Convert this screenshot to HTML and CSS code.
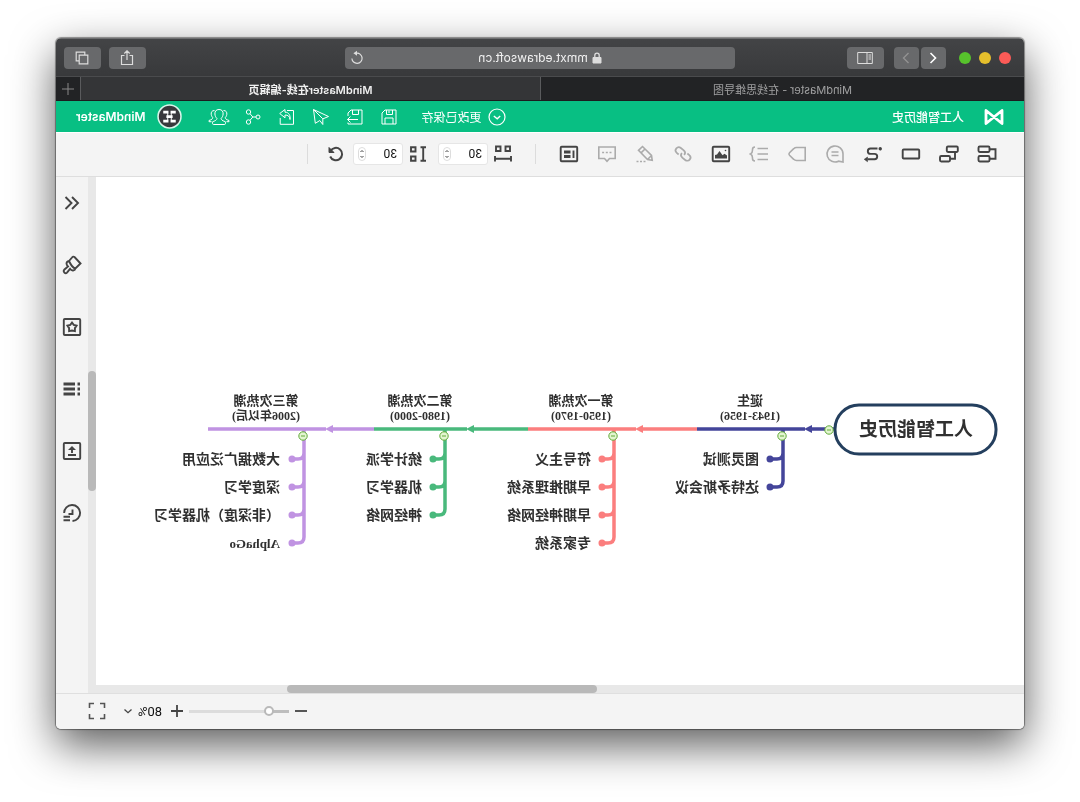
FILE: index.html
```html
<!DOCTYPE html>
<html lang="zh-CN">
<head>
<meta charset="utf-8">
<title>MindMaster在线-编辑页</title>
<link rel="stylesheet" href="styles.css">
</head>
<body>
<div class="window">
  <header class="titlebar">
    <div class="titlebar-group titlebar-group-start">
      <button class="light light-close" aria-label="Close"></button>
      <button class="light light-min" aria-label="Minimize"></button>
      <button class="light light-max" aria-label="Zoom"></button>
      <div class="nav-pair">
        <button class="chrome-btn chrome-btn-narrow" aria-label="Back"><svg class="i16" viewBox="0 0 16 16"><path d="M10.500 3L5.500 8l5 5" stroke="#fff" stroke-width="1.600"/></svg></button>
        <button class="chrome-btn chrome-btn-narrow" aria-label="Forward"><svg class="i16" viewBox="0 0 16 16"><path d="M5.500 3l5 5-5 5" stroke="#929292" stroke-width="1.400"/></svg></button>
      </div>
      <button class="chrome-btn" aria-label="Sidebar"><svg class="i16" viewBox="0 0 16 16"><path d="M.7 2.500h14.600v11H.7zM6 2.500v11M2 5h2.500M2 7h2.500M2 9h2.500" stroke="#ddd"/></svg></button>
    </div>
    <div class="address">
      <span class="address-text"><svg class="lock" viewBox="0 0 10 12"><path d="M1 5.500h8V11H1z" fill="#ddd" stroke="#ddd"/><path d="M2.800 5.500V3.300a2.200 2.200 0 0 1 4.400 0v2.200" stroke="#ddd" stroke-width="1.300"/></svg>mmxt.edrawsoft.cn</span>
      <button class="reload" aria-label="Reload"><svg class="i16" viewBox="0 0 16 16"><path d="M8.500 3.200a5.100 5.100 0 1 0 4.600 5.300" stroke="#ddd" stroke-width="1.200"/><path d="M8 .8l3.600 2.400L8 5.800z" fill="#ddd"/></svg></button>
    </div>
    <div class="titlebar-group titlebar-group-end">
      <button class="chrome-btn" aria-label="Share"><svg class="i16" viewBox="0 0 16 16"><path d="M5.500 5.500h-3v9h11v-9h-3M8 10V1M5.300 3.500L8 .8l2.700 2.700" stroke="#ddd" stroke-width="1.200"/></svg></button>
      <button class="chrome-btn" aria-label="Tabs"><svg class="i16" viewBox="0 0 16 16"><path d="M2.200 5.200h8.600v8.600H2.200zM5.200 5V2.200h8.600v8.600H11" stroke="#ddd" stroke-width="1.200"/></svg></button>
    </div>
  </header>

  <nav class="tabs">
    <a class="tab" href="#home">MindMaster - 在线思维导图</a>
    <a class="tab tab-active" href="#edit">MindMaster在线-编辑页</a>
    <button class="tab-add" aria-label="New tab"><svg class="i16" viewBox="0 0 16 16"><path d="M8 2v12M2 8h12" stroke="#888"/></svg></button>
  </nav>

  <div class="appbar">
    <svg class="logo" viewBox="0 0 20 16"><path d="M2 1.500l16 13V1.500l-16 13z" stroke="#fff" stroke-width="2.800" stroke-linejoin="round"/></svg>
    <h1 class="doc-name">人工智能历史</h1>
    <div class="saved"><svg class="i18" viewBox="0 0 18 18"><circle cx="9" cy="9" r="8" stroke="#fff" stroke-width="1.200"/><path d="M5.800 8l3 2.800L12.200 8" stroke="#fff" stroke-width="1.400"/></svg><span>更改已保存</span></div>
    <div class="app-actions">
      <button class="app-btn" aria-label="保存"><svg class="i18" viewBox="0 0 18 18"><path d="M2 2h11l3 3v11H2zM5 16v-6h8v6M5.500 2v4.500h6V2M9 2.500V5"/></svg></button>
      <button class="app-btn" aria-label="另存为"><svg class="i18" viewBox="0 0 18 18"><path d="M16 8V5l-3-3H2v14h14v-1.500M5.500 2v4.500h6V2M6 11.500h10.500M13.500 8.500l3 3-3 3"/></svg></button>
      <button class="app-btn" aria-label="发送"><svg class="i18" viewBox="0 0 18 18"><path d="M16.500 1.500L1.500 8.500l5.500 2.300M16.500 1.500l-1.800 13.800-4.500-2.800M16.500 1.500L7.200 10.800v5.700l3-4"/></svg></button>
      <button class="app-btn" aria-label="导出"><svg class="i18" viewBox="0 0 18 18"><path d="M9 2.500H2.500v13.800h13.300V10M6 11.500c.4-3.300 2-4.500 5-4.500v2.800l5.300-4.300-5.300-4v2.700C7 4.200 5.500 7.500 6 11.500z"/></svg></button>
      <button class="app-btn" aria-label="分享"><svg class="i18" viewBox="0 0 18 18"><circle cx="4" cy="9" r="2"/><circle cx="13.500" cy="4" r="2.200"/><circle cx="13.500" cy="14" r="2.200"/><path d="M6 9h3.200l2.800-3.300M9.200 9l2.800 3.300"/></svg></button>
      <button class="app-btn" aria-label="协作"><svg class="i22" viewBox="0 0 22 18"><path d="M11 1.500c-3 0-4.300 2-4.100 4.500.2 2.100.9 3.400 2 4.300-.1 1.500-.8 2.200-4.200 3.400-.5 1.700 0 2.800.6 2.800h11.400c.6 0 1.100-1.100.6-2.800-3.400-1.200-4.100-1.900-4.200-3.400 1.100-.9 1.800-2.200 2-4.300.2-2.500-1.100-4.500-4.100-4.500zM6.500 2.500C3.800 2.500 3 4.200 3.200 6.300c.2 1.600.8 2.600 1.500 3.200-.2 1.500-.7 2-3.700 3v1.200h2.500M15.500 2.500c2.700 0 3.500 1.700 3.300 3.800-.2 1.600-.8 2.600-1.500 3.200.2 1.500.7 2 3.700 3v1.200h-2.500"/></svg></button>
    </div>
    <svg class="avatar" viewBox="0 0 24 24"><circle cx="12" cy="12" r="11" fill="#38383c" stroke="#d9f5ea" stroke-width="1.500"/><path d="M6 6.500h5v2.700H6zM13 6.500h5v2.700h-5zM6 15h5v2.700H6zM13 15h5v2.700h-5zM9 10.700h6v2.800H9z" fill="#fff"/><path d="M10.300 8.500v7M13.700 8.500v7" stroke="#fff" stroke-width=".9"/></svg>
    <span class="account">MindMaster</span>
  </div>

  <div class="toolbar">
    <button class="tool" aria-label="主题"><svg class="i20" viewBox="0 0 20 20"><rect x="7.500" y="2.500" width="11" height="5.500" rx="1.200"/><rect x="7.500" y="12" width="11" height="5.500" rx="1.200"/><path d="M7.500 5.200h-6v9.500h6"/></svg></button>
    <button class="tool" aria-label="子主题"><svg class="i20" viewBox="0 0 20 20"><rect x="1.200" y="2.500" width="11" height="5.500" rx="1.200"/><rect x="9" y="12" width="10" height="5.500" rx="1.200"/><path d="M4 8v6.700h5"/></svg></button>
    <button class="tool" aria-label="浮动主题"><svg class="i20" viewBox="0 0 20 20"><rect x="1.800" y="5.500" width="16.500" height="9" rx="1"/></svg></button>
    <button class="tool" aria-label="关系线"><svg class="i20" viewBox="0 0 20 20"><path d="M5.500 4.500h7a2.700 2.700 0 0 1 0 5.400H8.500a2.700 2.700 0 0 0 0 5.400h7"/><circle cx="2.800" cy="4.800" r="1" fill="#444" stroke-width="1.400"/><path d="M15.500 13l3.300 2.300-3.300 2.400z" fill="#444" stroke-width=".6"/></svg></button>
    <button class="tool tool-off" aria-label="标注"><svg class="i20" viewBox="0 0 20 20"><path d="M2 18v-8a8 8 0 1 1 4.500 7.200L2 18zM6.500 8h7M6.500 11.500h7"/></svg></button>
    <button class="tool tool-off" aria-label="外框"><svg class="i20" viewBox="0 0 20 20"><path d="M1.800 3.500h8.700c1.200 0 2 .4 2.800 1.200l4.200 4q1.200 1.300 0 2.600l-4.200 4c-.8.800-1.600 1.200-2.800 1.200H1.800z"/></svg></button>
    <button class="tool tool-off" aria-label="概要"><svg class="i20" viewBox="0 0 20 20"><path d="M1 4.500h10.500M1 10h10.500M1 15.500h10.500M14 3c2 0 2.500.8 2.500 2.500S16.300 9 18.500 10c-2.200 1-2 2.800-2 4.500s-.5 2.500-2.500 2.500"/></svg></button>
    <button class="tool" aria-label="图片"><svg class="i20" viewBox="0 0 20 20"><rect x="1.800" y="2.800" width="16.500" height="14.500" rx="1"/><path d="M4 14.500v-3l2.500-1.700 2 1.500L11.500 7l2.500 3.500 2 .5v3.500z" fill="#444" stroke="none"/><circle cx="5.500" cy="6.500" r=".8" fill="#444" stroke="none"/></svg></button>
    <button class="tool tool-off" aria-label="超链接"><svg class="i20" viewBox="0 0 20 20"><g transform="rotate(-40 10 10)" stroke-width="1.700"><path d="M11.500 10a3.200 3.200 0 0 1-3.200 3.200H4.500a3.200 3.200 0 0 1 0-6.400H7M8.500 10a3.200 3.200 0 0 1 3.200-3.200h3.800a3.200 3.200 0 0 1 0 6.400H13"/></g></svg></button>
    <button class="tool tool-off" aria-label="注释"><svg class="i20" viewBox="0 0 20 20"><path d="M12.500 2.500l4 3.800-9 9.200-4.700.8.700-4.800zM10 5l4 3.800M3.500 11.500l4 4"/><path d="M9.500 17.500h9" stroke-dasharray="2 1.500"/></svg></button>
    <button class="tool tool-off" aria-label="评论"><svg class="i20" viewBox="0 0 20 20"><path d="M1.800 3h16.400v11.500h-5.700L10 17.300l-2.500-2.800H1.800z"/><path d="M5.500 8.500h9.500" stroke-dasharray="2 1.700"/></svg></button>
    <button class="tool" aria-label="备注"><svg class="i20" viewBox="0 0 20 20"><rect x="1.800" y="2.800" width="16.500" height="14.500" rx="1"/><path d="M5.500 6.500v7.500"/><path d="M8.500 8H15M8.500 12.500H15" stroke-width="2.800"/></svg></button>
    <span class="divider"></span>
    <label class="spacing"><svg class="i20" viewBox="0 0 20 20"><path d="M3 2.500h4.500v4.500H3zM12.500 2.500H17v4.500h-4.500zM2 12v5.500M18 12v5.500M2 14.800h16"/></svg>
      <span class="stepper"><input class="step-input" type="text" value="30" aria-label="水平间距"><svg class="arrows" viewBox="0 0 8 14"><rect x=".5" y=".5" width="7" height="13" rx="3.500" stroke="#ddd"/><path d="M2.500 5L4 3.500 5.500 5M2.500 9L4 10.500 5.500 9" stroke="#444"/></svg></span></label>
    <label class="spacing"><svg class="i20" viewBox="0 0 20 20"><path d="M2 3.200h5.500M2 16.800h5.500M4.800 3.200v13.600M12.500 3.200H17v4.300h-4.500zM12.500 12.500H17v4.300h-4.500z"/></svg>
      <span class="stepper"><input class="step-input" type="text" value="30" aria-label="垂直间距"><svg class="arrows" viewBox="0 0 8 14"><rect x=".5" y=".5" width="7" height="13" rx="3.500" stroke="#ddd"/><path d="M2.500 5L4 3.500 5.500 5M2.500 9L4 10.500 5.500 9" stroke="#444"/></svg></span></label>
    <button class="reset" aria-label="重置"><svg class="i20" viewBox="0 0 20 20"><path d="M15.500 7a6.200 6.200 0 1 0 .3 5.500" stroke-width="2"/><path d="M17 3.500v5h-5z" fill="#444" stroke-width="1"/></svg></button>
    <span class="divider"></span>
  </div>

  <main class="workspace">
    <section class="canvas-area">
      <svg class="map" viewBox="0 0 928 508" preserveAspectRatio="xMinYMid meet">
        <g class="indigo">
          <path d="M190 252h22M219 252h108M241 252v52q0 6 6 6h7M241 276q0 6 6 6h7"/>
          <path class="tip" d="M212 248l8 4-8 4z"/>
          <circle class="dot" cx="254" cy="282" r="3.500"/><circle class="dot" cx="254" cy="310" r="3.500"/>
        </g>
        <g class="coral">
          <path d="M327 252h54M388 252h108M410 252v108q0 6 6 6h6M410 276q0 6 6 6h6M410 304q0 6 6 6h6M410 332q0 6 6 6h6"/>
          <path class="tip" d="M381 248l8 4-8 4z"/>
          <circle class="dot" cx="422" cy="282" r="3.500"/><circle class="dot" cx="422" cy="310" r="3.500"/><circle class="dot" cx="422" cy="338" r="3.500"/><circle class="dot" cx="422" cy="366" r="3.500"/>
        </g>
        <g class="green">
          <path d="M496 252h54M557 252h93M579 252v80q0 6 6 6h6M579 276q0 6 6 6h6M579 304q0 6 6 6h6"/>
          <path class="tip" d="M550 248l8 4-8 4z"/>
          <circle class="dot" cx="591" cy="282" r="3.500"/><circle class="dot" cx="591" cy="310" r="3.500"/><circle class="dot" cx="591" cy="338" r="3.500"/>
        </g>
        <g class="purple">
          <path d="M650 252h41M698 252h118M720 252v108q0 6 6 6h6M720 276q0 6 6 6h6M720 304q0 6 6 6h6M720 332q0 6 6 6h6"/>
          <path class="tip" d="M691 248l8 4-8 4z"/>
          <circle class="dot" cx="732" cy="282" r="3.500"/><circle class="dot" cx="732" cy="310" r="3.500"/><circle class="dot" cx="732" cy="338" r="3.500"/><circle class="dot" cx="732" cy="366" r="3.500"/>
        </g>
        <rect class="root" x="28" y="228" width="161" height="49" rx="24"/>
        <g class="collapse">
          <circle cx="195" cy="253" r="4.200"/><path d="M193 253h4"/>
          <circle cx="242" cy="259" r="4.200"/><path d="M240 259h4"/>
          <circle cx="411" cy="259" r="4.200"/><path d="M409 259h4"/>
          <circle cx="580" cy="259" r="4.200"/><path d="M578 259h4"/>
          <circle cx="721" cy="259" r="4.200"/><path d="M719 259h4"/>
        </g>
        <text class="root-text" x="108" y="259">人工智能历史</text>
        <g class="topic">
          <text x="274" y="228">诞生</text><text x="443" y="228">第一次热潮</text><text x="604" y="228">第二次热潮</text><text x="758" y="228">第三次热潮</text>
        </g>
        <g class="years">
          <text x="274" y="243">(1943-1956)</text><text x="443" y="243">(1950-1970)</text><text x="604" y="243">(1980-2000)</text><text x="758" y="243">(2006年以后)</text>
        </g>
        <g class="leaf">
          <text x="265" y="287">图灵测试</text><text x="265" y="315">达特矛斯会议</text>
          <text x="433" y="287">符号主义</text><text x="433" y="315">早期推理系统</text><text x="433" y="343">早期神经网络</text><text x="433" y="371">专家系统</text>
          <text x="602" y="287">统计学派</text><text x="602" y="315">机器学习</text><text x="602" y="343">神经网络</text>
          <text x="744" y="287">大数据广泛应用</text><text x="744" y="315">深度学习</text><text x="744" y="343">（非深度）机器学习</text><text class="latin" x="744" y="371">AlphaGo</text>
        </g>
      </svg>
      <div class="vbar"><span class="vthumb"></span></div>
      <div class="hbar"><span class="hthumb"></span></div>
    </section>
    <aside class="side">
      <button class="side-btn" aria-label="收起"><svg class="i20" viewBox="0 0 20 20"><path d="M10 4l-6 6 6 6M16.500 4l-6 6 6 6"/></svg></button>
      <button class="side-btn" aria-label="样式"><svg class="i20" viewBox="0 0 20 20"><path d="M1.500 8.500l6-6.500q1.500-1 2.500.5l3 3.500q2.500.5 2.500 2.500 0 1.500-1.500 3l3.800 3.200c1.500 2-1 4.600-2.800 2.900L12 13.800q-1.500 2.200-3.500 1.600-1.500-.4-1.800-1.900zM6.700 13.500c2.300-.5 4-2.500 6.300-7.500"/></svg></button>
      <button class="side-btn" aria-label="图标"><svg class="i20" viewBox="0 0 20 20"><rect x="1.800" y="2" width="16.400" height="16" rx="1"/><path d="M10 5.500l1.700 2.300 2.900.8-1.700 2.500v3L10 13.500l-2.900.6v-3L5.400 8.600l2.900-.8z"/></svg></button>
      <button class="side-btn" aria-label="大纲"><svg class="i20" viewBox="0 0 20 20"><path d="M7 5h11.500M7 10h11.500M7 15h11.500M2 5h2.500M2 10h2.500M2 15h2.500" stroke-width="3.200"/></svg></button>
      <button class="side-btn" aria-label="上传"><svg class="i20" viewBox="0 0 20 20"><rect x="1.800" y="2" width="16.400" height="16" rx="1"/><path d="M6 14h8M10 12V7"/><path d="M6 9l4-4 4 4z" fill="#444" stroke="none"/></svg></button>
      <button class="side-btn" aria-label="历史"><svg class="i20" viewBox="0 0 20 20"><path d="M9.500 18A8 8 0 1 1 17.900 10M9.500 6.500V11h4M12 13.800h6.500M12 17.300h6.500"/></svg></button>
    </aside>
  </main>

  <footer class="status">
    <button class="zoom-btn" aria-label="缩小"><svg class="i16" viewBox="0 0 16 16"><path d="M2 8h12" stroke="#444" stroke-width="1.800"/></svg></button>
    <input class="zoom" type="range" min="0" max="100" value="17" aria-label="缩放">
    <button class="zoom-btn" aria-label="放大"><svg class="i16" viewBox="0 0 16 16"><path d="M2 8h12M8 2v12" stroke="#444" stroke-width="1.800"/></svg></button>
    <select class="percent" aria-label="缩放比例"><option>80%</option></select>
    <svg class="caret" viewBox="0 0 10 10"><path d="M1.500 3.500L5 6.700l3.500-3.200" stroke="#444" stroke-width="1.300"/></svg>
    <button class="fit" aria-label="全屏"><svg class="i20" viewBox="0 0 20 20"><path d="M2.500 7V2.500H7M13 2.500h4.500V7M17.500 13v4.500H13M7 17.500H2.500V13"/></svg></button>
  </footer>
</div>
</body>
</html>
```

FILE: styles.css
```css
* {
  box-sizing: border-box;
}

body {
  margin: 0;
  min-height: 100vh;
  padding: 38px 56px 74px;
  display: flex;
  background: #fff;
  font-family: Inter, "Noto Sans CJK SC", sans-serif;
  font-size: 12px;
  color: #333;
}

button {
  border: 0;
  padding: 0;
  background: none;
  display: flex;
  align-items: center;
  justify-content: center;
}

svg {
  display: block;
  fill: none;
  flex: none;
}

/* The whole window is shown as a mirror image. */
.window {
  flex: 1;
  min-width: 0;
  display: flex;
  flex-direction: column;
  overflow: hidden;
  border-radius: 5px;
  background: #f4f4f4;
  transform: scaleX(-1);
  box-shadow: 0 0 1px 1px rgba(0, 0, 0, .4), 0 16px 44px rgba(0, 0, 0, .65);
}

.i16 { width: 16px; height: 16px; }
.i18 { width: 18px; height: 18px; }
.i20 { width: 20px; height: 20px; }
.i22 { width: 22px; height: 18px; }

/* Browser chrome */
.titlebar {
  height: 38px;
  padding: 0 8px;
  display: grid;
  grid-template-columns: 1fr minmax(0, 390px) 1fr;
  align-items: center;
  background: linear-gradient(#434446, #38393b);
  border-top: 1px solid #6d6e70;
}

.titlebar-group {
  display: flex;
  align-items: center;
  gap: 8px;
}

.titlebar-group-start {
  padding-left: 5px;
}

.titlebar-group-end {
  justify-content: flex-end;
}

.light {
  width: 12px;
  height: 12px;
  border-radius: 50%;
}

.light-close { background: #fc5b57; }
.light-min { background: #e5bf2c; }
.light-max { background: #57c22c; }

.nav-pair {
  display: flex;
  gap: 2px;
  margin: 0 2px 0 5px;
}

.chrome-btn {
  width: 37px;
  height: 22px;
  border-radius: 4px;
  background: #68696b;
}

.chrome-btn-narrow {
  width: 25px;
}

.address {
  height: 22px;
  border-radius: 4px;
  background: #68696b;
  display: flex;
  align-items: center;
  padding-right: 4px;
}

.address-text {
  flex: 1;
  padding-left: 20px;
  display: flex;
  align-items: center;
  justify-content: center;
  gap: 4px;
  color: #f1f1f1;
  line-height: 16px;
}

.lock {
  width: 10px;
  height: 12px;
}

.tabs {
  height: 25px;
  display: flex;
  background: #222325;
  border-top: 1px solid #4a4b4d;
  border-bottom: 1px solid #1c1c1e;
}

.tab {
  flex: 1;
  display: flex;
  align-items: center;
  justify-content: center;
  color: #a0a0a1;
  font-size: 11px;
  text-decoration: none;
}

.tab-active {
  background: #343537;
  border-left: 1px solid #5a5b5d;
  border-right: 1px solid #5a5b5d;
  color: #f0f0f0;
  font-weight: 600;
  flex: 0 1 461px;
}

.tab-add {
  width: 24px;
}

/* Application header */
.appbar {
  height: 31px;
  padding: 0 20px;
  display: flex;
  align-items: center;
  background: #08bf83;
  color: #fff;
}

.logo {
  width: 20px;
  height: 16px;
}

.doc-name {
  margin: 0 0 0 20px;
  font-size: 12px;
  font-weight: 500;
}

.saved {
  margin-left: auto;
  display: flex;
  align-items: center;
  gap: 6px;
}

.app-actions {
  display: flex;
  margin: 0 20px 0 16px;
  stroke: #fff;
}

.app-btn {
  width: 34px;
  height: 24px;
}

.avatar {
  width: 25px;
  height: 25px;
}

.account {
  margin-left: 11px;
  font-weight: 600;
}

/* Editing tools */
.toolbar {
  height: 45px;
  padding: 0 0 2px 18px;
  display: flex;
  align-items: center;
  border-top: 1px solid #fff;
  border-bottom: 1px solid #dedede;
  background: #f4f4f4;
  stroke: #444;
  stroke-width: 1.9;
}

.tool {
  width: 38px;
  height: 30px;
}

.tool-off {
  stroke: #ababab;
  stroke-width: 1.6;
}

.divider {
  width: 1px;
  height: 20px;
  margin: 0 15px 0 14px;
  background: #dcdcdc;
}

.spacing {
  display: flex;
  align-items: center;
  gap: 5px;
  margin: 0 0 0 10px;
}

.divider + .spacing {
  margin-left: 7px;
}

.stepper {
  height: 22px;
  width: 50px;
  padding: 0 4px 0 5px;
  display: flex;
  align-items: center;
  background: #fff;
  border: 1px solid #e6e6e6;
  border-radius: 3px;
}

.step-input {
  flex: 1;
  min-width: 0;
  padding: 0;
  border: 0;
  background: none;
  font: 12px Roboto, sans-serif;
  color: #111;
}

.arrows {
  width: 8px;
  height: 14px;
  stroke-width: 1;
}

.reset {
  margin: 0 4px 0 7px;
}

/* Canvas with its scrollbars */
.workspace {
  flex: 1;
  min-height: 0;
  display: flex;
}

.canvas-area {
  flex: 1;
  min-width: 0;
  display: grid;
  grid-template: minmax(0, 1fr) 8px / minmax(0, 1fr) 8px;
  background: #e8e8e8;
}

.map {
  width: 100%;
  height: 100%;
  background: #fff;
}

.map g {
  stroke-width: 3.5;
}

.indigo { stroke: #44459a; fill: #44459a; }
.coral { stroke: #fb7e7e; fill: #fb7e7e; }
.green { stroke: #49b97c; fill: #49b97c; }
.purple { stroke: #c093e2; fill: #c093e2; }

.indigo path, .coral path, .green path, .purple path {
  fill: none;
}

.map .tip {
  fill: inherit;
  stroke: none;
}

.map .dot {
  stroke: none;
}

.root {
  fill: #fff;
  stroke: #243f5e;
  stroke-width: 3;
}

.map .collapse {
  fill: #e3f5d0;
  stroke: #62ab3a;
  stroke-width: 1;
}

.map text {
  font-family: "Liberation Serif", "Noto Sans CJK SC", serif;
  fill: #303030;
  stroke: none;
}

.map .root-text {
  font-size: 19px;
  font-weight: 700;
  text-anchor: middle;
}

.topic {
  font-size: 13px;
  font-weight: 700;
  text-anchor: middle;
}

.years {
  font-size: 12px;
  font-weight: 700;
  text-anchor: middle;
}

.leaf {
  font-size: 14px;
  font-weight: 700;
}

.leaf .latin {
  font-size: 13px;
}

.vbar, .hbar {
  display: flex;
}

.vbar {
  grid-area: 1 / 2 / 3 / 3;
  flex-direction: column;
  padding-top: 194px;
}

.hbar {
  grid-area: 2 / 1;
  padding-left: 46%;
}

.vthumb {
  height: 120px;
  border-radius: 4px;
  background: #b9b9b9;
}

.hthumb {
  width: 310px;
  border-radius: 4px;
  background: #b9b9b9;
}

.side {
  width: 32px;
  padding: 10px 0;
  display: flex;
  flex-direction: column;
  align-items: center;
  gap: 30px;
  background: #f4f4f4;
  stroke: #444;
  stroke-width: 1.9;
}

.side-btn {
  width: 32px;
  height: 32px;
}

/* Zoom controls */
.status {
  height: 36px;
  padding: 0 31px 1px 0;
  display: flex;
  align-items: center;
  justify-content: flex-end;
  border-top: 1px solid #dfdfdf;
  background: #f4f4f4;
}

.zoom-btn {
  width: 16px;
}

.zoom {
  appearance: none;
  width: 100px;
  height: 10px;
  margin: 0 4px;
  background: linear-gradient(#bdbdbd, #bdbdbd) 0 50% / 20px 3px no-repeat, linear-gradient(#dcdcdc, #dcdcdc) 0 50% / 100% 3px no-repeat;
}

.zoom::-webkit-slider-thumb {
  appearance: none;
  width: 10px;
  height: 10px;
  border: 2px solid #b9b9b9;
  border-radius: 50%;
  background: #fff;
}

.percent {
  appearance: none;
  border: 0;
  padding: 0;
  margin-left: 7px;
  background: none;
  font: 13px Roboto, "Liberation Sans", sans-serif;
  color: #111;
}

.caret {
  width: 10px;
  height: 10px;
  margin: 0 16px 0 4px;
}

.fit {
  stroke: #555;
  stroke-width: 1.6;
}
```
